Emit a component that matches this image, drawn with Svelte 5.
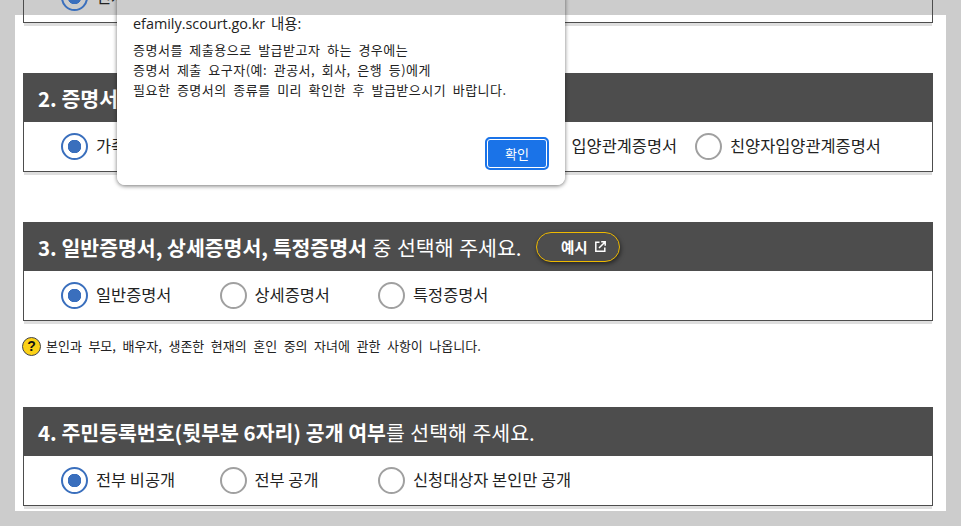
<script>
  const sections = [
    {
      id: 2,
      bold: '2. 증명서의 종류',
      rest: '를 선택해 주세요.',
      options: ['가족관계증명서', '기본증명서', '혼인관계증명서', '입양관계증명서', '친양자입양관계증명서']
    },
    {
      id: 3,
      bold: '3. 일반증명서, 상세증명서, 특정증명서',
      rest: ' 중 선택해 주세요.',
      example: true,
      options: ['일반증명서', '상세증명서', '특정증명서'],
      note: '본인과 부모, 배우자, 생존한 현재의 혼인 중의 자녀에 관한 사항이 나옵니다.'
    },
    {
      id: 4,
      bold: '4. 주민등록번호(뒷부분 6자리) 공개 여부',
      rest: '를 선택해 주세요.',
      options: ['전부 비공개', '전부 공개', '신청대상자 본인만 공개']
    }
  ];
</script>

<div class="page">
  <main class="panel">
    <div class="box cut">
      <div class="options">
        <label class="option">
          <span class="radio on"></span>
          <span class="text">전체</span>
        </label>
      </div>
    </div>

    {#each sections as s}
      <section class="box" class:noted={s.note}>
        <h2>
          <b>{s.bold}</b><span class="rest">{s.rest}</span>
          {#if s.example}
            <button class="example">
              예시
              <svg width="11" height="11" viewBox="0 0 11 11" fill="none" stroke="#fff" stroke-width="1.5">
                <path d="M4.5 1.2H.8v9h9V6.5" />
                <path d="M4 7 9.8 1.2M6.2 .8h4v4" />
              </svg>
            </button>
          {/if}
        </h2>
        <div class="options">
          {#each s.options as opt, i}
            <label class="option">
              <span class="radio" class:on={i === 0}></span>
              <span class="text">{opt}</span>
            </label>
          {/each}
        </div>
      </section>
      {#if s.note}
        <p class="note"><span class="help">?</span><span class="note-text">{s.note}</span></p>
      {/if}
    {/each}
  </main>

  <div class="dialog" role="alertdialog">
    <div class="dialog-top"></div>
    <div class="dialog-body">
      <div class="origin">efamily.scourt.go.kr 내용:</div>
      <p class="message">증명서를 제출용으로 발급받고자 하는 경우에는<br />증명서 제출 요구자(예: 관공서, 회사, 은행 등)에게<br />필요한 증명서의 종류를 미리 확인한 후 발급받으시기 바랍니다.</p>
      <div class="actions"><button class="ok">확인</button></div>
    </div>
  </div>
</div>

<style>
  :global(body) {
    margin: 0;
    overflow: hidden;
    background: #cccccc;
  }

  .page {
    position: relative;
    width: 961px;
    height: 526px;
    overflow: hidden;
    padding-top: 15px;
    box-sizing: border-box;
    font-family: "Noto Sans CJK KR", "Noto Sans", sans-serif;
    color: #222;
  }

  .panel {
    display: flow-root;
    width: 931px;
    height: 496px;
    margin-left: 15px;
    padding: 0 13px 0 8px;
    box-sizing: border-box;
    background: #fff;
  }

  .box {
    width: 910px;
    margin-bottom: 50px;
    box-shadow: 0 4px 0 -1px #dedede;
  }

  .box.noted {
    margin-bottom: 15px;
  }

  .cut {
    margin-top: -42px;
  }

  h2 {
    display: flex;
    align-items: center;
    height: 49px;
    margin: 0;
    padding-left: 15px;
    background: #4d4d4d;
    color: #fff;
    font-size: 20.5px;
    font-weight: 400;
    white-space: pre;
  }

  h2 b {
    font-weight: 700;
  }

  .rest {
    word-spacing: 1px;
  }

  .options {
    display: flex;
    align-items: center;
    height: 50px;
    padding-left: 37px;
    border: 1px solid #4d4d4d;
    border-top: 0;
    box-sizing: border-box;
  }

  .option {
    display: flex;
    align-items: center;
    gap: 8px;
    min-width: 158.5px;
    font-size: 16.4px;
    white-space: nowrap;
  }

  .text {
    margin-bottom: 3px;
  }

  .radio {
    width: 27px;
    height: 27px;
    border: 2px solid #a0a0a0;
    border-radius: 50%;
    box-sizing: border-box;
    flex: none;
  }

  .radio.on {
    border-color: #3a6fbd;
    background: radial-gradient(circle, #3a6fbd 0 6.5px, transparent 7px);
  }

  .example {
    display: flex;
    align-items: center;
    justify-content: center;
    gap: 4px;
    width: 84px;
    height: 30px;
    margin-left: 15px;
    padding: 0 0 0 10px;
    border: 1.5px solid #eeb900;
    border-radius: 15px;
    background: #4d4d4d;
    box-shadow: 1px 2px 4px rgba(0, 0, 0, 0.5);
    color: #fff;
    font-family: inherit;
    font-size: 14.5px;
    font-weight: 700;
  }

  .note {
    display: flex;
    align-items: center;
    gap: 5px;
    height: 20px;
    margin: 0 0 51px -1px;
  }

  .note-text {
    margin-bottom: 2px;
    font-size: 13px;
    word-spacing: 3.6px;
  }

  .help {
    display: flex;
    align-items: center;
    justify-content: center;
    width: 19px;
    height: 19px;
    border: 1.5px solid #444;
    border-radius: 50%;
    box-sizing: border-box;
    background: #fcd116;
    color: #111;
    font-size: 14px;
    font-weight: 700;
    font-family: "Liberation Sans", sans-serif;
  }

  .dialog {
    position: absolute;
    left: 117px;
    top: -10px;
    width: 448px;
    height: 195px;
    border-radius: 8px;
    overflow: hidden;
    display: flex;
    flex-direction: column;
    box-shadow: 0 1px 4px rgba(0, 0, 0, 0.55);
  }

  .dialog-top {
    height: 25px;
    background: #cccccc;
    flex: none;
  }

  .dialog-body {
    flex: 1;
    display: flex;
    flex-direction: column;
    padding: 0 16px 15px;
    background: #fff;
  }

  .origin {
    height: 17px;
    font-family: "Open Sans", "Noto Sans CJK KR", sans-serif;
    font-size: 14.4px;
    line-height: 17px;
    word-spacing: 2px;
  }

  .message {
    flex: 1;
    margin: 8px 0 0;
    font-size: 13px;
    letter-spacing: 0.5px;
    word-spacing: 3.1px;
    line-height: 20px;
  }

  .actions {
    display: flex;
    justify-content: flex-end;
  }

  .ok {
    width: 64px;
    height: 33px;
    border: 2px solid #1a73e8;
    border-radius: 5px;
    box-shadow: inset 0 0 0 1px #fff;
    background: #1a73e8;
    color: #fff;
    font-family: inherit;
    font-size: 13px;
  }
</style>
